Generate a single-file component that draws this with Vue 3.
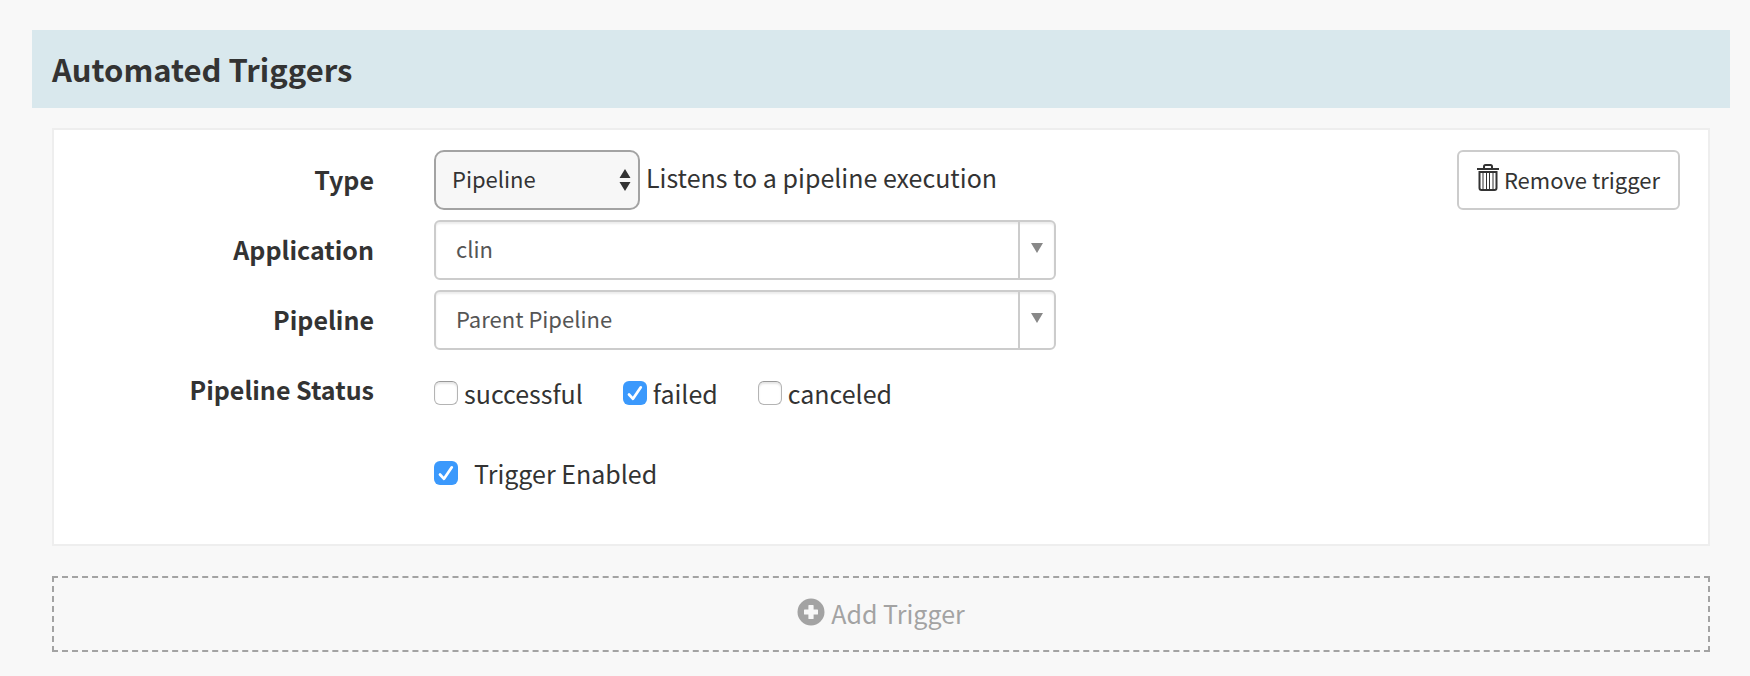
<script setup>
import { ref } from 'vue'

const type = ref('Pipeline')
const pickers = ref([
  { id: 'application', label: 'Application', value: 'clin' },
  { id: 'pipeline', label: 'Pipeline', value: 'Parent Pipeline' },
])
const statuses = ref([
  { name: 'successful', checked: false },
  { name: 'failed', checked: true },
  { name: 'canceled', checked: false },
])
const enabled = ref(true)
</script>

<template>
  <main class="page">
    <header class="heading">
      <h1>Automated Triggers</h1>
    </header>

    <div class="body">
      <section class="card">
        <div class="fields">
          <div class="row">
            <label class="name" for="type">Type</label>
            <div class="inline">
              <div class="type-box">
                <select id="type" v-model="type" class="type-select">
                  <option>Pipeline</option>
                </select>
                <svg class="updown" viewBox="0 0 12 24" aria-hidden="true">
                  <path d="M6 1 11.500 10H.5zM6 23 .5 14H11.500z" />
                </svg>
              </div>
              <span class="hint">Listens to a pipeline execution</span>
            </div>
          </div>

          <div v-for="p in pickers" :key="p.id" class="row">
            <label class="name" :for="p.id">{{ p.label }}</label>
            <div class="picker">
              <select :id="p.id" v-model="p.value" class="picker-select">
                <option>{{ p.value }}</option>
              </select>
              <span class="arrow" aria-hidden="true">
                <svg viewBox="0 0 12 10"><path d="M0 0H12L6 10z" /></svg>
              </span>
            </div>
          </div>

          <div class="row" role="group" aria-labelledby="status-name">
            <span id="status-name" class="name">Pipeline Status</span>
            <div class="statuses">
              <label v-for="s in statuses" :key="s.name" class="check">
                <input v-model="s.checked" type="checkbox" />{{ s.name }}
              </label>
            </div>
          </div>

          <div class="row last">
            <label class="check wide">
              <input v-model="enabled" type="checkbox" />Trigger Enabled
            </label>
          </div>
        </div>

        <button type="button" class="remove">
          <svg class="trash" viewBox="0 0 22 28" aria-hidden="true">
            <path d="M0 6H22M7 6V3.500Q7 2 8.500 2H13.500Q15 2 15 3.500V6" />
            <path d="M2.500 9V25Q2.500 27 4.500 27H17.500Q19.500 27 19.500 25V9Z" />
            <path d="M6 9V26M9.500 9V26M12.500 9V26M16 9V26" class="ribs" />
          </svg>
          Remove trigger
        </button>
      </section>

      <button type="button" class="add">
        <svg class="plus" viewBox="0 0 28 28" aria-hidden="true">
          <path
            fill-rule="evenodd"
            d="M14 .5a13.500 13.500 0 1 1 0 27a13.500 13.500 0 1 1 0-27M12 7q-.6 0-.6.6V11.400H7.600q-.6 0-.6.6V16q0 .6.6.6H11.400V20.400q0 .6.6.6H16q.6 0 .6-.6V16.600H20.400q.6 0 .6-.6V12q0-.6-.6-.6H16.600V7.600q0-.6-.6-.6z"
          />
        </svg>
        Add Trigger
      </button>
    </div>
  </main>
</template>

<style>
body {
  background: #f8f8f8;
}
</style>

<style scoped>
.page {
  padding: 30px 20px 24px 32px;
  font-family: "Noto Sans CJK SC", "Noto Sans", sans-serif;
  font-size: 25px;
  line-height: 36px;
  color: #333;
}

.page *,
.page {
  box-sizing: border-box;
}

button,
select {
  font-family: inherit;
  color: inherit;
}

.heading {
  display: flex;
  align-items: center;
  height: 78px;
  padding: 0 20px;
  background: #d9e8ed;
}

h1 {
  margin: 0;
  font-size: 31px;
  font-weight: 600;
  line-height: 40px;
}

.body {
  display: flex;
  flex-direction: column;
  gap: 30px;
  padding: 20px 20px 0;
}

.card {
  display: flex;
  align-items: flex-start;
  gap: 20px;
  padding: 20px 28px 44px 20px;
  border: 2px solid #eee;
  background: #fff;
}

.fields {
  flex: 1;
  display: flex;
  flex-direction: column;
  gap: 10px;
}

.row {
  display: grid;
  grid-template-columns: 300px minmax(0, 622px);
  column-gap: 60px;
  align-items: center;
  min-height: 60px;
}

.name {
  padding-bottom: 2px;
  font-weight: 700;
  text-align: right;
}

.inline {
  display: flex;
  align-items: center;
  gap: 6px;
  white-space: nowrap;
}

.hint {
  padding-bottom: 6px;
}

.type-box,
.picker {
  display: grid;
  align-items: center;
}

.type-box {
  width: 206px;
}

.type-select,
.picker-select {
  grid-area: 1 / 1;
  width: 100%;
  height: 60px;
  appearance: none;
  font-size: 22px;
}

.type-select {
  padding: 0 36px 4px 16px;
  border: 2px solid #a3a3a3;
  border-radius: 10px;
  background: #f7f7f7;
}

.updown {
  grid-area: 1 / 1;
  justify-self: end;
  width: 12px;
  height: 24px;
  margin-right: 9px;
  fill: #333;
  pointer-events: none;
}

.picker-select {
  padding: 0 50px 4px 20px;
  border: 2px solid #ccc;
  border-radius: 6px;
  background: #fff;
  box-shadow: inset 0 2px 2px rgba(0, 0, 0, 0.075);
  color: #555;
}

.arrow {
  grid-area: 1 / 1;
  justify-self: end;
  display: flex;
  justify-content: center;
  width: 38px;
  height: 60px;
  padding: 23px 2px 0 0;
  border-left: 2px solid #ccc;
  pointer-events: none;
}

.arrow svg {
  width: 12px;
  height: 10px;
  fill: #888;
}

.statuses {
  display: flex;
  gap: 40px;
}

.check {
  display: flex;
  align-items: center;
  gap: 6px;
  padding-top: 6px;
}

.check.wide {
  grid-column: 2;
  gap: 16px;
}

.check input {
  appearance: none;
  width: 24px;
  height: 24px;
  margin: 0;
  border: 1px solid #b4b4b4;
  border-top-color: #999;
  border-radius: 6px;
  background: #fff;
  box-shadow: inset 0 2px 2px rgba(0, 0, 0, 0.1);
}

.check input:checked {
  border: 0;
  background: #3b99fc url("data:image/svg+xml,%3Csvg xmlns='http://www.w3.org/2000/svg' viewBox='0 0 24 24'%3E%3Cpath d='M6 13.500 10 17.800 17.800 6.300' fill='none' stroke='white' stroke-width='2.700' stroke-linecap='round' stroke-linejoin='round'/%3E%3C/svg%3E");
  box-shadow: none;
}

.last {
  margin-top: 10px;
}

.remove {
  display: flex;
  align-items: center;
  gap: 5px;
  height: 60px;
  padding: 0 18px 3px;
  border: 2px solid #ccc;
  border-radius: 6px;
  background: #fff;
  font-size: 22px;
  white-space: nowrap;
}

.trash {
  width: 22px;
  height: 28px;
  margin-bottom: 4px;
  fill: none;
  stroke: #333;
  stroke-width: 2;
}

.trash .ribs {
  stroke-width: 1;
}

.add {
  display: flex;
  align-items: center;
  justify-content: center;
  gap: 6px;
  height: 76px;
  padding-bottom: 4px;
  border: 2px dashed #a3a3a3;
  background: transparent;
  color: #a3a3a3;
  font-size: 25px;
}

.plus {
  width: 28px;
  height: 28px;
  margin-bottom: 2px;
  fill: #a3a3a3;
}
</style>
